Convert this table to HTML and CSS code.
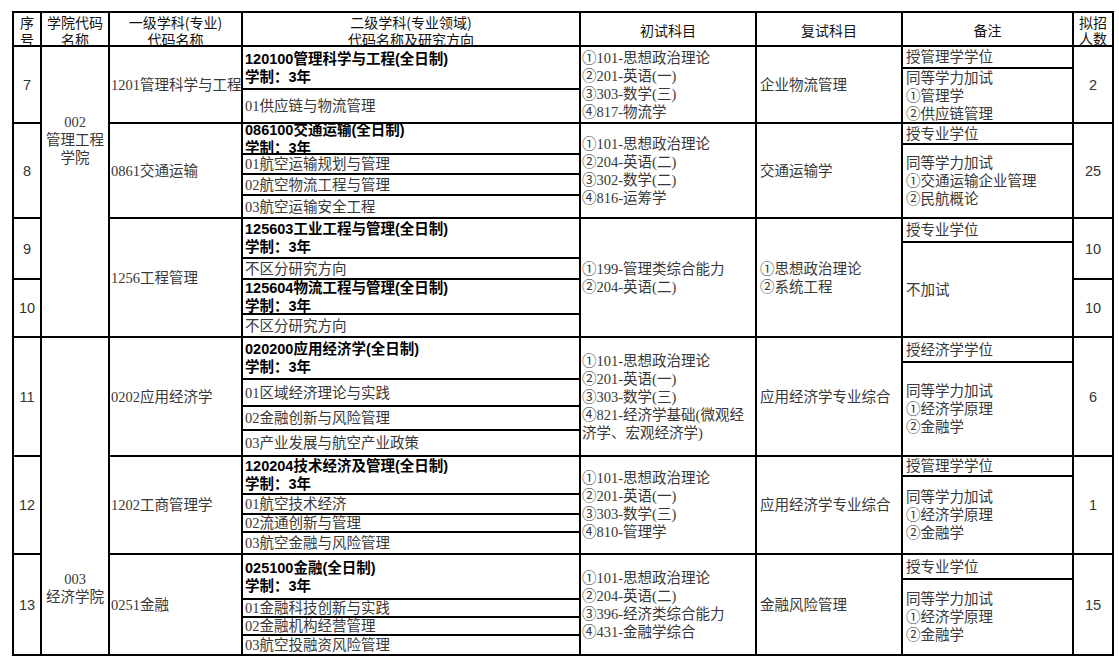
FILE: index.html
```html
<!DOCTYPE html>
<html lang="zh-CN">
<head>
<meta charset="utf-8">
<title>招生专业目录</title>
<link rel="stylesheet" href="styles.css">
</head>
<body>
<div class="sheet">
  <div class="cell hd c1"><div>序<br>号</div></div>
  <div class="cell hd c2"><div>学院代码<br>名称</div></div>
  <div class="cell hd c3"><div>一级学科(专业)<br>代码名称</div></div>
  <div class="cell hd c4"><div>二级学科(专业领域)<br>代码名称及研究方向</div></div>
  <div class="cell hd c5">初试科目</div>
  <div class="cell hd c6">复试科目</div>
  <div class="cell hd c7">备注</div>
  <div class="cell hd c8"><div class="tight">拟招<br>人数</div></div>

  <!-- 7 -->
  <div class="cell num c1">7</div>
  <div class="cell school c2 span4 s002"><div>002<br>管理工程<br>学院</div></div>
  <div class="cell txt c3">1201管理科学与工程</div>
  <div class="stack c4">
    <div class="sub head h41"><div>120100管理科学与工程(全日制)<br>学制：3年</div></div>
    <div class="sub last">01供应链与物流管理</div>
  </div>
  <div class="cell txt c5"><div>①101-思想政治理论<br>②201-英语(一)<br>③303-数学(三)<br>④817-物流学</div></div>
  <div class="cell txt c6">企业物流管理</div>
  <div class="stack c7">
    <div class="sub h20">授管理学学位</div>
    <div class="sub last"><div>同等学力加试<br>①管理学<br>②供应链管理</div></div>
  </div>
  <div class="cell num c8">2</div>

  <!-- 8 -->
  <div class="cell num c1">8</div>
  <div class="cell txt c3">0861交通运输</div>
  <div class="stack c4">
    <div class="sub head h29"><div>086100交通运输(全日制)<br>学制：3年</div></div>
    <div class="sub h18">01航空运输规划与管理</div>
    <div class="sub h19">02航空物流工程与管理</div>
    <div class="sub last">03航空运输安全工程</div>
  </div>
  <div class="cell txt c5"><div>①101-思想政治理论<br>②204-英语(二)<br>③302-数学(二)<br>④816-运筹学</div></div>
  <div class="cell txt c6">交通运输学</div>
  <div class="stack c7">
    <div class="sub h19">授专业学位</div>
    <div class="sub last"><div>同等学力加试<br>①交通运输企业管理<br>②民航概论</div></div>
  </div>
  <div class="cell num c8">25</div>

  <!-- 9 -->
  <div class="cell num c1">9</div>
  <div class="cell txt c3 span2">1256工程管理</div>
  <div class="stack c4">
    <div class="sub head h38"><div>125603工业工程与管理(全日制)<br>学制：3年</div></div>
    <div class="sub last">不区分研究方向</div>
  </div>
  <div class="cell txt c5 span2"><div>①199-管理类综合能力<br>②204-英语(二)</div></div>
  <div class="cell txt c6 span2"><div>①思想政治理论<br>②系统工程</div></div>
  <div class="stack c7 span2">
    <div class="sub h22">授专业学位</div>
    <div class="sub last">不加试</div>
  </div>
  <div class="cell num c8">10</div>

  <!-- 10 -->
  <div class="cell num c1">10</div>
  <div class="stack c4">
    <div class="sub head h33"><div>125604物流工程与管理(全日制)<br>学制：3年</div></div>
    <div class="sub last">不区分研究方向</div>
  </div>
  <div class="cell num c8">10</div>

  <!-- 11 -->
  <div class="cell num c1">11</div>
  <div class="cell school c2 span3 s003"><div>003<br>经济学院</div></div>
  <div class="cell txt c3">0202应用经济学</div>
  <div class="stack c4">
    <div class="sub head h40"><div>020200应用经济学(全日制)<br>学制：3年</div></div>
    <div class="sub h25">01区域经济理论与实践</div>
    <div class="sub h22">02金融创新与风险管理</div>
    <div class="sub last">03产业发展与航空产业政策</div>
  </div>
  <div class="cell txt c5"><div>①101-思想政治理论<br>②201-英语(一)<br>③303-数学(三)<br>④821-经济学基础(微观经<br>济学、宏观经济学)</div></div>
  <div class="cell txt c6">应用经济学专业综合</div>
  <div class="stack c7">
    <div class="sub h23">授经济学学位</div>
    <div class="sub last"><div>同等学力加试<br>①经济学原理<br>②金融学</div></div>
  </div>
  <div class="cell num c8">6</div>

  <!-- 12 -->
  <div class="cell num c1">12</div>
  <div class="cell txt c3">1202工商管理学</div>
  <div class="stack c4">
    <div class="sub head h36"><div>120204技术经济及管理(全日制)<br>学制：3年</div></div>
    <div class="sub h18">01航空技术经济</div>
    <div class="sub h16">02流通创新与管理</div>
    <div class="sub last">03航空金融与风险管理</div>
  </div>
  <div class="cell txt c5"><div>①101-思想政治理论<br>②201-英语(一)<br>③303-数学(三)<br>④810-管理学</div></div>
  <div class="cell txt c6">应用经济学专业综合</div>
  <div class="stack c7">
    <div class="sub h18">授管理学学位</div>
    <div class="sub last"><div>同等学力加试<br>①经济学原理<br>②金融学</div></div>
  </div>
  <div class="cell num c8">1</div>

  <!-- 13 -->
  <div class="cell num c1">13</div>
  <div class="cell txt c3">0251金融</div>
  <div class="stack c4">
    <div class="sub head h43"><div>025100金融(全日制)<br>学制：3年</div></div>
    <div class="sub h16">01金融科技创新与实践</div>
    <div class="sub h16">02金融机构经营管理</div>
    <div class="sub last">03航空投融资风险管理</div>
  </div>
  <div class="cell txt c5"><div>①101-思想政治理论<br>②204-英语(二)<br>③396-经济类综合能力<br>④431-金融学综合</div></div>
  <div class="cell txt c6">金融风险管理</div>
  <div class="stack c7">
    <div class="sub h23">授专业学位</div>
    <div class="sub last"><div>同等学力加试<br>①经济学原理<br>②金融学</div></div>
  </div>
  <div class="cell num c8">15</div>
</div>
</body>
</html>
```

FILE: styles.css
```css
html, body {
  margin: 0;
  padding: 0;
  background: #fff;
}

.sheet {
  display: grid;
  grid-template-columns: 26px 66px 131px 336px 174px 144px 169px 38px;
  grid-template-rows: 32px 75px 93px 59px 56px 117px 96px 99px;
  gap: 2px;
  padding: 2px;
  background: #000;
  width: max-content;
  margin: 11px 0 0 12px;
  font-family: "Liberation Serif", "Noto Sans CJK SC", serif;
  font-size: 14.5px;
  line-height: 18px;
  color: #383838;
}

.c1 { grid-column: 1; }
.c2 { grid-column: 2; }
.c3 { grid-column: 3; }
.c4 { grid-column: 4; }
.c5 { grid-column: 5; }
.c6 { grid-column: 6; }
.c7 { grid-column: 7; }
.c8 { grid-column: 8; }

.span2 { grid-row: span 2; }
.span3 { grid-row: span 3; }
.span4 { grid-row: span 4; }

.cell {
  background: #fff;
  display: flex;
  align-items: center;
  overflow: hidden;
  white-space: nowrap;
  min-width: 0;
}

.hd {
  font-family: "Noto Sans CJK SC", sans-serif;
  font-size: 14px;
  line-height: 17px;
  color: #111;
  justify-content: center;
  text-align: center;
  padding-top: 3px;
  box-sizing: border-box;
}

.hd .tight { line-height: 15.5px; }

.num {
  font-family: "Liberation Sans", "Noto Sans CJK SC", sans-serif;
  font-size: 14.5px;
  justify-content: center;
  color: #333;
}

.school {
  justify-content: center;
  text-align: center;
  align-items: flex-start;
  box-sizing: border-box;
}
.s002 { padding-top: 66px; }
.s003 { padding-top: 232px; }

.txt.c3 { padding-left: 1px; }
.txt.c5 { padding-left: 1px; }
.txt.c6 { padding-left: 3px; }

.stack {
  display: flex;
  flex-direction: column;
  gap: 2px;
  background: #000;
  min-width: 0;
}

.sub {
  background: #fff;
  display: flex;
  align-items: center;
  overflow: hidden;
  white-space: nowrap;
  flex: none;
}
.sub.last { flex: 1 1 0; min-height: 0; }

.c4 .sub { padding-left: 2px; }
.c7 .sub { padding-left: 3px; }

.head {
  font-family: "Liberation Sans", "Noto Sans CJK SC", sans-serif;
  font-weight: 700;
  color: #000;
}

.h16 { height: 16px; }
.h18 { height: 18px; }
.h19 { height: 19px; }
.h20 { height: 20px; }
.h22 { height: 22px; }
.h23 { height: 23px; }
.h25 { height: 25px; }
.h29 { height: 29px; }
.h33 { height: 33px; }
.h36 { height: 36px; }
.h38 { height: 38px; }
.h40 { height: 40px; }
.h41 { height: 41px; }
.h43 { height: 43px; }
```
